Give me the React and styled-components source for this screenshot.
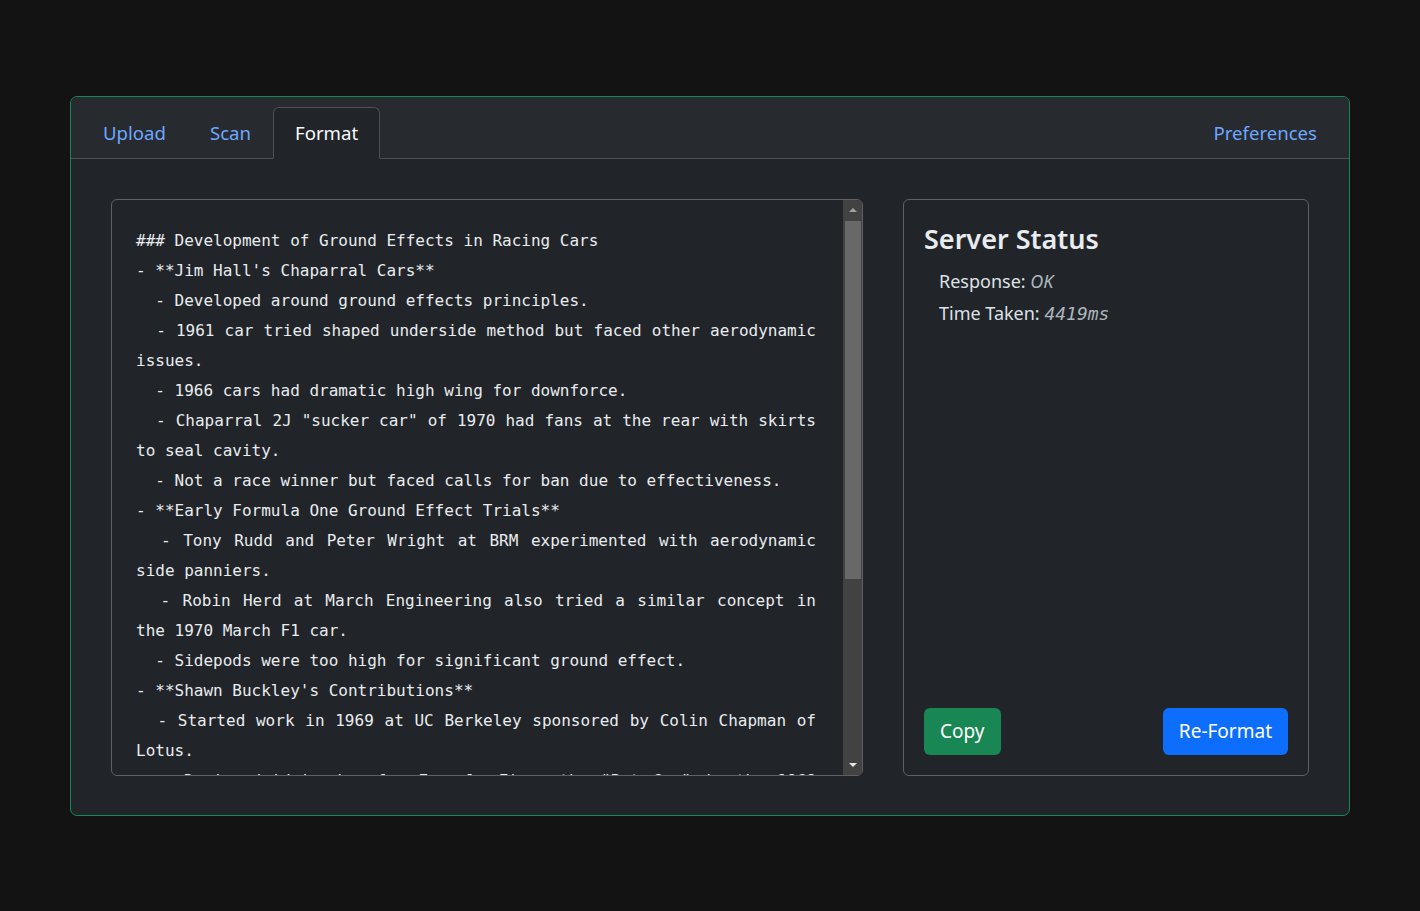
import styled, { createGlobalStyle } from "styled-components";

const GlobalStyle = createGlobalStyle`
  html, body {
    margin: 0;
    padding: 0;
    background: #131313;
    color: #dee2e6;
    font-family: "Noto Sans", "Open Sans", sans-serif;
  }
  * {
    box-sizing: border-box;
  }
`;

const text = `### Development of Ground Effects in Racing Cars
- **Jim Hall's Chaparral Cars**
  - Developed around ground effects principles.
  - 1961 car tried shaped underside method but faced other aerodynamic issues.
  - 1966 cars had dramatic high wing for downforce.
  - Chaparral 2J "sucker car" of 1970 had fans at the rear with skirts to seal cavity.
  - Not a race winner but faced calls for ban due to effectiveness.
- **Early Formula One Ground Effect Trials**
  - Tony Rudd and Peter Wright at BRM experimented with aerodynamic side panniers.
  - Robin Herd at March Engineering also tried a similar concept in the 1970 March F1 car.
  - Sidepods were too high for significant ground effect.
- **Shawn Buckley's Contributions**
  - Started work in 1969 at UC Berkeley sponsored by Colin Chapman of Lotus.
  - Designed high wing for Formula Five, the "Bat Car" in the 1969 Tech Formula series.
- **Lotus 78 and 79**
  - Peter Wright and Colin Chapman developed the Lotus 78 "wing car".
  - The Lotus 79 refined the concept and won the 1978 championship.`;

const Page = styled.div`
  min-height: 100vh;
  display: flex;
  align-items: center;
  justify-content: center;
`;

const Card = styled.div`
  width: 1280px;
  border: 1px solid #198754;
  border-radius: 7px;
  background: #212529;
  overflow: hidden;
`;

const Header = styled.div`
  display: flex;
  align-items: flex-end;
  justify-content: space-between;
  padding: 10px 10px 0;
  background: #272a2f;
  border-bottom: 1px solid #495057;
`;

const Tabs = styled.div`
  display: flex;
`;

const Tab = styled.a`
  display: block;
  padding: 10px 21px;
  margin-bottom: -1px;
  font-size: 18.6px;
  line-height: 30px;
  text-decoration: none;
  cursor: pointer;
  border: 1px solid ${(p) => (p.$active ? "#495057" : "transparent")};
  border-bottom-color: ${(p) => (p.$active ? "#212529" : "transparent")};
  border-radius: 6px 6px 0 0;
  background: ${(p) => (p.$active ? "#212529" : "transparent")};
  color: ${(p) => (p.$active ? "#f8f9fa" : "#6ea8fe")};
`;

const Body = styled.div`
  display: grid;
  grid-template-columns: 752px 406px;
  gap: 40px;
  padding: 40px 40px 39px;
`;

const EditorFrame = styled.div`
  display: flex;
  height: 577px;
  border: 1px solid #5c6166;
  border-radius: 6px;
  overflow: hidden;
  background: #212529;
`;

const Editor = styled.textarea`
  flex: 1;
  display: block;
  min-width: 0;
  height: 100%;
  margin: 0;
  padding: 26px 27px 0 24px;
  border: none;
  background: transparent;
  color: #e9ecef;
  font-family: "DejaVu Sans Mono", "Liberation Mono", monospace;
  font-size: 16px;
  line-height: 30px;
  text-align: justify;
  resize: none;
  outline: none;
  overflow: hidden;
`;

const Scrollbar = styled.div`
  width: 19px;
  display: flex;
  flex-direction: column;
  background: #424242;
`;

const ScrollArrow = styled.div`
  height: 20px;
  display: flex;
  align-items: center;
  justify-content: center;

  &::after {
    content: "";
    width: 0;
    height: 0;
    border-left: 4px solid transparent;
    border-right: 4px solid transparent;
    ${(p) =>
      p.$down
        ? "border-top: 4px solid #e6e6e6;"
        : "border-bottom: 4px solid #a3a3a3;"}
  }
`;

const ScrollThumb = styled.div`
  height: 358px;
  margin: 1px 1px 0 2px;
  background: #686868;
`;

const ScrollTrack = styled.div`
  flex: 1;
`;

const StatusCard = styled.div`
  display: flex;
  flex-direction: column;
  border: 1px solid #5c6166;
  border-radius: 6px;
  padding: 20px;
`;

const Title = styled.h3`
  margin: 0 0 7px;
  font-size: 27px;
  line-height: 38px;
  font-weight: 600;
  color: #e9ecef;
`;

const StatusList = styled.ul`
  list-style: none;
  margin: 0;
  padding: 0 0 0 15px;
  flex: 1;
`;

const StatusItem = styled.li`
  font-size: 18px;
  line-height: 32px;
  color: #dee2e6;
`;

const Value = styled.em`
  color: #adb5bd;
  font-family: ${(p) => (p.$mono ? '"DejaVu Sans Mono", monospace' : "inherit")};
  font-size: ${(p) => (p.$mono ? "18px" : "inherit")};
`;

const Actions = styled.div`
  display: flex;
  justify-content: space-between;
  align-items: center;
`;

const Button = styled.button`
  height: 47px;
  padding: 0 16px;
  border: none;
  border-radius: 6px;
  font-family: "Noto Sans", sans-serif;
  font-size: 19px;
  color: #fff;
  background: ${(p) => p.$bg};
  cursor: pointer;
`;

export default function App() {
  return (
    <>
      <GlobalStyle />
      <Page>
        <Card>
          <Header>
            <Tabs>
              <Tab>Upload</Tab>
              <Tab>Scan</Tab>
              <Tab $active>Format</Tab>
            </Tabs>
            <Tab>Preferences</Tab>
          </Header>
          <Body>
            <EditorFrame>
              <Editor defaultValue={text} spellCheck={false} />
              <Scrollbar>
                <ScrollArrow />
                <ScrollThumb />
                <ScrollTrack />
                <ScrollArrow $down />
              </Scrollbar>
            </EditorFrame>
            <StatusCard>
              <Title>Server Status</Title>
              <StatusList>
                <StatusItem>
                  Response: <Value>OK</Value>
                </StatusItem>
                <StatusItem>
                  Time Taken: <Value $mono>4419ms</Value>
                </StatusItem>
              </StatusList>
              <Actions>
                <Button $bg="#198754">Copy</Button>
                <Button $bg="#0d6efd">Re-Format</Button>
              </Actions>
            </StatusCard>
          </Body>
        </Card>
      </Page>
    </>
  );
}
